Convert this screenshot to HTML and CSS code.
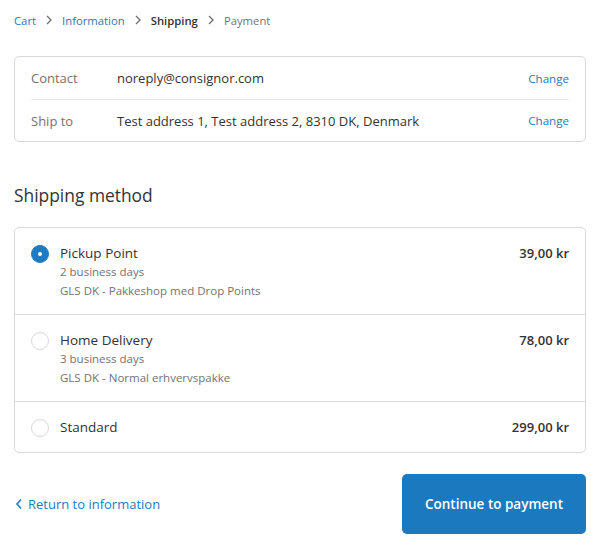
FILE: index.html
```html
<!DOCTYPE html>
<html>
<head>
<meta charset="utf-8">
<link rel="stylesheet" href="styles.css">
</head>
<body>
<div class="page">
  <nav class="crumbs">
    <a class="crumb-link">Cart</a>
    <svg class="chev" width="8" height="10" viewBox="0 0 8 10"><path d="M2 1l4 4-4 4" fill="none" stroke="#737373" stroke-width="1.4"/></svg>
    <a class="crumb-link">Information</a>
    <svg class="chev" width="8" height="10" viewBox="0 0 8 10"><path d="M2 1l4 4-4 4" fill="none" stroke="#737373" stroke-width="1.4"/></svg>
    <span class="crumb-current">Shipping</span>
    <svg class="chev" width="8" height="10" viewBox="0 0 8 10"><path d="M2 1l4 4-4 4" fill="none" stroke="#737373" stroke-width="1.4"/></svg>
    <span class="crumb-muted">Payment</span>
  </nav>

  <div class="review">
    <div class="review-row">
      <div class="review-label">Contact</div>
      <div class="review-value">noreply@consignor.com</div>
      <a class="review-change">Change</a>
    </div>
    <div class="review-row">
      <div class="review-label">Ship to</div>
      <div class="review-value">Test address 1, Test address 2, 8310 DK, Denmark</div>
      <a class="review-change">Change</a>
    </div>
  </div>

  <h2 class="section-title">Shipping method</h2>

  <div class="methods">
    <div class="method">
      <span class="radio checked"></span>
      <div class="method-info">
        <div class="method-name">Pickup Point</div>
        <div class="method-sub">2 business days</div>
        <div class="method-sub">GLS DK - Pakkeshop med Drop Points</div>
      </div>
      <div class="method-price">39,00 kr</div>
    </div>
    <div class="method">
      <span class="radio"></span>
      <div class="method-info">
        <div class="method-name">Home Delivery</div>
        <div class="method-sub">3 business days</div>
        <div class="method-sub">GLS DK - Normal erhvervspakke</div>
      </div>
      <div class="method-price">78,00 kr</div>
    </div>
    <div class="method">
      <span class="radio"></span>
      <div class="method-info">
        <div class="method-name">Standard</div>
      </div>
      <div class="method-price">299,00 kr</div>
    </div>
  </div>

  <div class="footer">
    <a class="back">
      <svg width="8" height="12" viewBox="0 0 8 12"><path d="M6 1.5L2 6l4 4.5" fill="none" stroke="#1f7bc1" stroke-width="1.6"/></svg>
      <span>Return to information</span>
    </a>
    <button class="continue">Continue to payment</button>
  </div>
</div>
</body>
</html>
```

FILE: styles.css
```css
* { box-sizing: border-box; }
html, body { margin: 0; padding: 0; background: #fff; }
body {
  font-family: "Open Sans", "Noto Sans", sans-serif;
  color: #333;
  font-size: 13px;
}
.page {
  padding: 10px 12px 0 14px;
}
.crumbs {
  display: flex;
  align-items: center;
  gap: 9px;
  font-size: 11.3px;
  height: 20px;
}
.crumb-link { color: #2a79b8; }
.crumb-current { color: #333; font-weight: 600; }
.crumb-muted { color: #737373; }
.chev { display: block; }

.review {
  margin-top: 26px;
  border: 1px solid #d9d9d9;
  border-radius: 5px;
  padding: 0 16px;
}
.review-row {
  display: flex;
  align-items: center;
  height: 42px;
}
.review-row + .review-row { border-top: 1px solid #e6e6e6; }
.review-label { width: 86px; color: #737373; }
.review-value { flex: 1; color: #333; }
.review-change { color: #2a79b8; font-size: 11.6px; }

.section-title {
  margin: 38px 0 16px;
  font-size: 17.4px;
  font-weight: 400;
  color: #333;
  height: 31px;
  line-height: 31px;
}

.methods {
  border: 1px solid #d9d9d9;
  border-radius: 5px;
}
.method {
  display: flex;
  align-items: flex-start;
  padding: 15px 16px 0 16px;
  min-height: 87px;
}
.method:first-child { min-height: 86px; }
.method:last-child { min-height: 51px; }
.method + .method { border-top: 1px solid #d9d9d9; }
.radio {
  width: 18px;
  height: 18px;
  border-radius: 50%;
  border: 1px solid #d9d9d9;
  margin-top: 2px;
  margin-right: 11px;
  flex: none;
  position: relative;
}
.radio.checked {
  background: #1f7bc1;
  border-color: #1f7bc1;
}
.radio.checked::after {
  content: "";
  position: absolute;
  left: 6px;
  top: 6px;
  width: 4px;
  height: 4px;
  border-radius: 50%;
  background: #fff;
}
.method-info { flex: 1; }
.method-name { font-size: 13.5px; line-height: 20px; color: #333; }
.method-sub { font-size: 11.5px; line-height: 18.5px; color: #737373; }
.method-price { font-weight: 600; line-height: 20px; color: #333; }

.footer {
  display: flex;
  align-items: center;
  justify-content: space-between;
  margin-top: 21px;
}
.back {
  display: flex;
  align-items: center;
  gap: 5px;
  color: #2a79b8;
  padding-left: 1px;
}
.back svg { display: block; }
.continue {
  width: 184px;
  height: 60px;
  border: none;
  border-radius: 5px;
  background: #1a79bf;
  color: #fff;
  font-family: inherit;
  font-weight: 600;
  font-size: 13.5px;
}
```
